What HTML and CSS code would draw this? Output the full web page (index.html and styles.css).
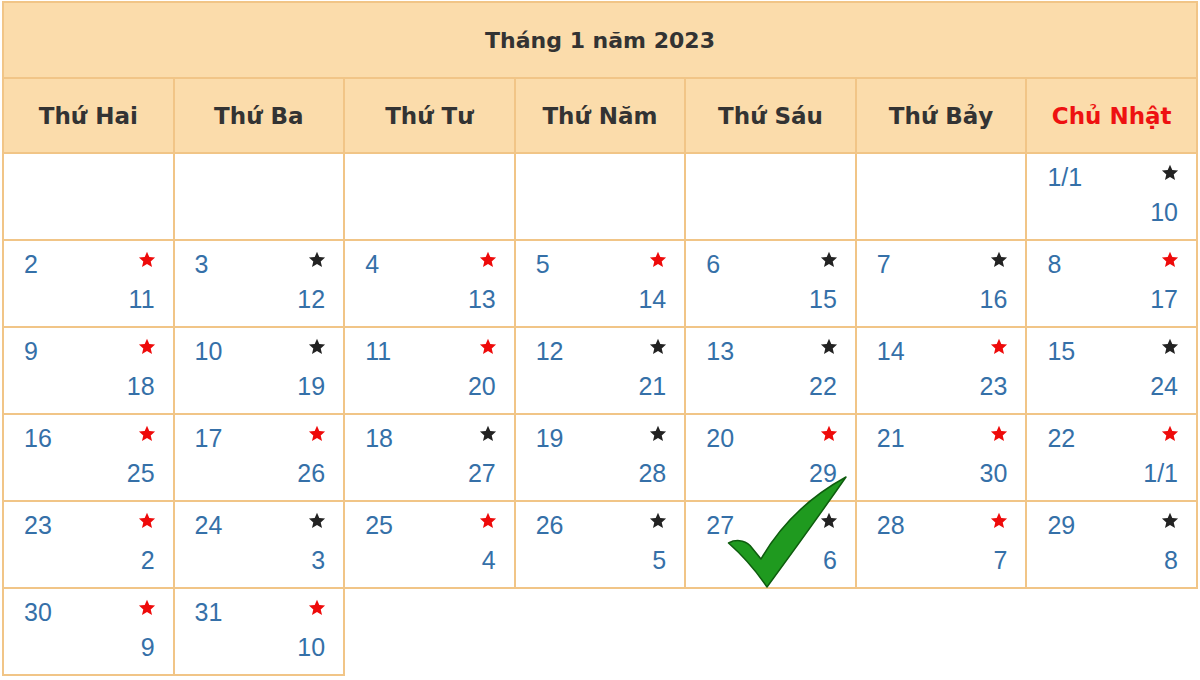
FILE: index.html
```html
<!DOCTYPE html>
<html lang="vi">
<head>
<meta charset="utf-8">
<title>Tháng 1 năm 2023</title>
<link rel="stylesheet" href="styles.css">
</head>
<body>
<div class="page">
  <table class="cal">
    <thead>
      <tr><th colspan="7" class="title">Tháng 1 năm 2023</th></tr>
      <tr class="days">
        <th>Thứ Hai</th><th>Thứ Ba</th><th>Thứ Tư</th><th>Thứ Năm</th><th>Thứ Sáu</th><th>Thứ Bảy</th><th class="sun">Chủ Nhật</th>
      </tr>
    </thead>
    <tbody id="body"></tbody>
  </table>
  <svg class="check" viewBox="725 472 126 120" width="126" height="120">
    <path d="M728.5 543 C735 539.5 744 539.5 750 545.5 L761 559 Q791 507 846 477 Q814 523 767 587 Q750 562 728.5 543 Z" fill="#1f9a1f" stroke="#0e5c0e" stroke-width="1.5" stroke-linejoin="round"/>
  </svg>
</div>
<script src="app.js"></script>
</body>
</html>
```

FILE: app.js
```js
var days = [
  null,null,null,null,null,null,["1/1","10","b"],
  ["2","11","r"],["3","12","b"],["4","13","r"],["5","14","r"],["6","15","b"],["7","16","b"],["8","17","r"],
  ["9","18","r"],["10","19","b"],["11","20","r"],["12","21","b"],["13","22","b"],["14","23","r"],["15","24","b"],
  ["16","25","r"],["17","26","r"],["18","27","b"],["19","28","b"],["20","29","r"],["21","30","r"],["22","1/1","r"],
  ["23","2","r"],["24","3","b"],["25","4","r"],["26","5","b"],["27","6","b"],["28","7","r"],["29","8","b"],
  ["30","9","r"],["31","10","r"]
];
var star = '<svg class="star" viewBox="0 0 24 23"><path d="M12 1l3.1 7.2 7.8.7-5.9 5.2 1.8 7.7L12 17.7 5.2 21.8 7 14.1 1.1 8.9l7.8-.7z"/></svg>';
var tbody = document.getElementById("body");
var html = "";
for (var i = 0; i < days.length; i += 7) {
  html += "<tr>";
  for (var j = i; j < Math.min(i + 7, days.length); j++) {
    var d = days[j];
    if (!d) { html += '<td class="empty"></td>'; continue; }
    html += '<td><div class="top"><span class="sol">' + d[0] + '</span><span class="st ' + (d[2] === "r" ? "red" : "black") + '">' + star + '</span></div><div class="lunar">' + d[1] + '</div></td>';
  }
  html += "</tr>";
}
tbody.innerHTML = html;
```

FILE: styles.css
```css
* { box-sizing: border-box; }
body {
  margin: 0;
  background: #ffffff;
  font-family: "Liberation Sans", Arial, sans-serif;
}
.page {
  position: relative;
  width: 1200px;
  height: 680px;
  padding: 1px 0 0 2px;
}
.cal {
  border-collapse: collapse;
  table-layout: fixed;
  width: 1196px;
}
.cal th,
.cal td {
  border: 2px solid #f1c587;
  padding: 0;
}
.title {
  height: 76px;
  background: #fbdcab;
  font: bold 22px "DejaVu Sans", Verdana, sans-serif;
  color: #333333;
  text-align: center;
  vertical-align: middle;
}
.days th {
  height: 75px;
  background: #fbdcab;
  font: bold 23px "DejaVu Sans", Verdana, sans-serif;
  color: #333333;
  text-align: center;
  vertical-align: middle;
}
.days .sun { color: #ee1111; }
.cal td {
  height: 87px;
  vertical-align: top;
  padding: 6px 18px 0 20px;
  color: #3570a8;
  font-size: 25px;
  line-height: 35px;
}
.top {
  display: flex;
  justify-content: space-between;
  align-items: flex-start;
}
.st {
  display: block;
  width: 18px;
  height: 17px;
  margin-top: 4px;
  margin-right: -1px;
}
.star { display: block; width: 18px; height: 17px; }
.red .star { fill: #ee0a0a; }
.black .star { fill: #222222; }
.lunar { text-align: right; }
.check {
  position: absolute;
  left: 725px;
  top: 472px;
}
```
